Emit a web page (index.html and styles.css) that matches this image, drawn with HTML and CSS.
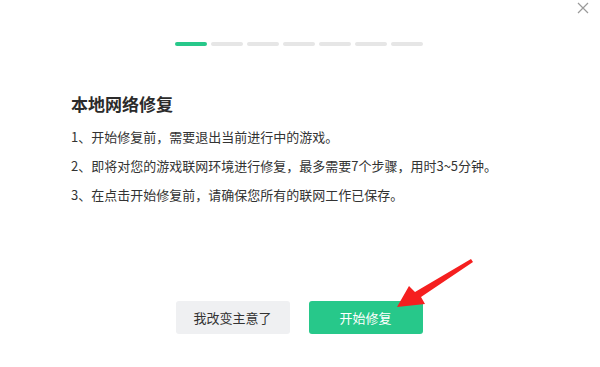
FILE: index.html
```html
<!DOCTYPE html>
<html lang="zh-CN">
<head>
    <meta charset="UTF-8">
    <title>本地网络修复</title>
    <link rel="stylesheet" href="styles.css">
</head>
<body>

<div class="dialog">
    <button class="close-btn" aria-label="关闭">
        <svg width="12" height="12" viewBox="0 0 12 12">
            <path d="M1 1 L11 11 M11 1 L1 11" stroke="#9a9a9a" stroke-width="1.2" fill="none"/>
        </svg>
    </button>

    <div class="steps">
        <span class="step active"></span>
        <span class="step"></span>
        <span class="step"></span>
        <span class="step"></span>
        <span class="step"></span>
        <span class="step"></span>
        <span class="step"></span>
    </div>

    <div class="content">
        <h1>本地网络修复</h1>
        <ol class="notes">
            <li>1、开始修复前，需要退出当前进行中的游戏。</li>
            <li>2、即将对您的游戏联网环境进行修复，最多需要7个步骤，用时3~5分钟。</li>
            <li>3、在点击开始修复前，请确保您所有的联网工作已保存。</li>
        </ol>
    </div>

    <div class="actions">
        <button class="btn btn-cancel">我改变主意了</button>
        <button class="btn btn-start">开始修复</button>
    </div>

    <!-- red annotation arrow -->
    <svg class="arrow" width="90" height="60" viewBox="0 0 90 60">
        <polygon points="81,4 83,7 31,42 35,49 7,52 19,31 25,37" fill="#f51f1f"/>
    </svg>
</div>

</body>
</html>
```

FILE: styles.css
```css
* {
    box-sizing: border-box;
}
html, body {
    margin: 0;
    height: 100%;
    overflow: hidden;
}
body {
    font-family: "Noto Sans CJK SC", "Noto Sans", sans-serif;
    background-color: #fff;
    color: #333;
}
.dialog {
    position: relative;
    width: 600px;
    height: 367px;
    display: flex;
    flex-direction: column;
}
.close-btn {
    position: absolute;
    top: 2px;
    right: 11px;
    width: 12px;
    height: 12px;
    padding: 0;
    border: none;
    background: none;
    cursor: pointer;
}
.close-btn svg {
    display: block;
}
.steps {
    display: flex;
    justify-content: center;
    gap: 4px;
    padding-top: 42px;
    padding-right: 2px;
}
.step {
    width: 32px;
    height: 4px;
    border-radius: 2px;
    background-color: #e6e6e6;
}
.step.active {
    background-color: #27c88a;
}
.content {
    padding: 0 71px;
    margin-top: 46px;
}
h1 {
    margin: 0;
    font-size: 17px;
    line-height: 24px;
    font-weight: bold;
    color: #2b2b2b;
}
.notes {
    list-style: none;
    margin: 6px 0 0;
    padding: 0;
    font-size: 13px;
    line-height: 29px;
}
.actions {
    margin-top: auto;
    padding-bottom: 33px;
    display: flex;
    justify-content: center;
    gap: 19px;
    padding-right: 2px;
}
.btn {
    width: 114px;
    height: 33px;
    border: none;
    border-radius: 3px;
    font-family: inherit;
    font-size: 13px;
    cursor: pointer;
}
.btn-cancel {
    background-color: #eff0f2;
    color: #333;
}
.btn-start {
    background-color: #27c88a;
    color: #fff;
}
.arrow {
    position: absolute;
    left: 390px;
    top: 255px;
}
```
